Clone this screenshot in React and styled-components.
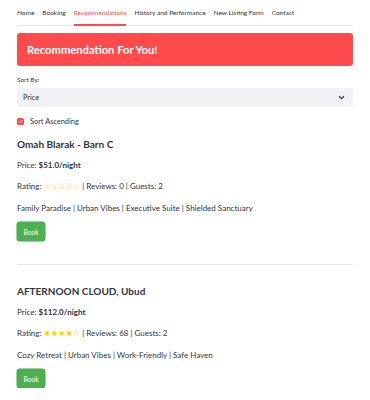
import React from "react";
import styled, { createGlobalStyle } from "styled-components";

const Global = createGlobalStyle`
  html, body { margin: 0; padding: 0; background: #ffffff; }
  body { font-family: Lato, "Noto Sans", sans-serif; color: #31333f; }
  * { box-sizing: border-box; }
`;

const Page = styled.div`
  width: 370px;
  padding: 0 17px;
`;

const Tabs = styled.div`
  display: flex;
  gap: 8px;
  height: 26px;
  border-bottom: 1px solid #e6e7eb;
`;

const Tab = styled.div`
  font-size: 6.5px;
  display: flex;
  align-items: center;
  padding-top: 1px;
  color: ${(p) => (p.$active ? "#ff4b4b" : "#31333f")};
  border-bottom: 2px solid ${(p) => (p.$active ? "#ff4b4b" : "transparent")};
  margin-bottom: -1px;
  white-space: nowrap;
`;

const Banner = styled.div`
  margin-top: 7px;
  height: 33px;
  background: #ff4b4b;
  border-radius: 3px;
  color: #ffffff;
  font-weight: 700;
  font-size: 11.2px;
  display: flex;
  align-items: center;
  padding-left: 10px;
`;

const Label = styled.div`
  margin-top: 9px;
  font-size: 6.4px;
  height: 10px;
  line-height: 10px;
`;

const Select = styled.div`
  margin-top: 3px;
  height: 19px;
  background: #f0f2f6;
  border-radius: 3px;
  display: flex;
  align-items: center;
  justify-content: space-between;
  padding: 0 8px 0 6px;
  font-size: 7.4px;
`;

const CheckRow = styled.div`
  margin-top: 9px;
  display: flex;
  align-items: center;
  gap: 6px;
  font-size: 7.4px;
  height: 10px;
`;

const Box = styled.span`
  width: 7px;
  height: 7px;
  border-radius: 1.5px;
  background: #ff4b4b;
  display: inline-flex;
  align-items: center;
  justify-content: center;
`;

const Card = styled.div`
  display: flex;
  flex-direction: column;
  align-items: flex-start;
`;

const Title = styled.div`
  font-weight: 700;
  font-size: 10px;
  height: 14px;
  line-height: 14px;
  margin-top: ${(p) => p.$top}px;
`;

const Line = styled.div`
  font-size: 8px;
  height: 12px;
  line-height: 12px;
  margin-top: ${(p) => p.$top}px;
  white-space: nowrap;
`;

const Strong = styled.span`
  font-weight: 700;
`;

const Stars = styled.span`
  color: #fdd000;
  font-size: 8.2px;
  font-family: "DejaVu Sans", sans-serif;
`;

const BookButton = styled.button`
  margin-top: 8px;
  height: 19px;
  width: 28px;
  border: none;
  border-radius: 3px;
  background: #4caf50;
  color: #ffffff;
  font-family: inherit;
  font-size: 6.6px;
  padding: 0;
  box-shadow: 0 0 0 0.5px #43a047;
`;

const Divider = styled.hr`
  margin: 23px 0 0;
  border: none;
  border-top: 1px solid #e6e7eb;
  width: 100%;
`;

const Chevron = () => (
  <svg width="7" height="5" viewBox="0 0 7 5">
    <path d="M1 1.2 L3.5 3.6 L6 1.2" fill="none" stroke="#31333f" strokeWidth="1.2" />
  </svg>
);

const Check = () => (
  <svg width="5" height="5" viewBox="0 0 5 5">
    <path d="M0.9 2.6 L2.1 3.8 L4.2 1.2" fill="none" stroke="#fff" strokeWidth="0.9" />
  </svg>
);

const listings = [
  {
    name: "Omah Blarak - Barn C",
    price: "$51.0/night",
    stars: "☆☆☆☆☆",
    reviews: 0,
    guests: 2,
    tags: "Family Paradise | Urban Vibes | Executive Suite | Shielded Sanctuary",
  },
  {
    name: "AFTERNOON CLOUD, Ubud",
    price: "$112.0/night",
    stars: "★★★★☆",
    reviews: 68,
    guests: 2,
    tags: "Cozy Retreat | Urban Vibes | Work-Friendly | Safe Haven",
  },
];

export default function App() {
  const tabs = ["Home", "Booking", "Recommendations", "History and Performance", "New Listing Form", "Contact"];
  return (
    <Page>
      <Global />
      <Tabs>
        {tabs.map((t) => (
          <Tab key={t} $active={t === "Recommendations"}>{t}</Tab>
        ))}
      </Tabs>
      <Banner>Recommendation For You!</Banner>
      <Label>Sort By:</Label>
      <Select>
        <span>Price</span>
        <Chevron />
      </Select>
      <CheckRow>
        <Box><Check /></Box>
        <span>Sort Ascending</span>
      </CheckRow>
      {listings.map((l, i) => (
        <Card key={l.name}>
          {i > 0 && <Divider />}
          <Title $top={i === 0 ? 11 : 19}>{l.name}</Title>
          <Line $top={8}>Price: <Strong>{l.price}</Strong></Line>
          <Line $top={9}>Rating: <Stars>{l.stars}</Stars> | Reviews: {l.reviews} | Guests: {l.guests}</Line>
          <Line $top={10}>{l.tags}</Line>
          <BookButton>Book</BookButton>
        </Card>
      ))}
    </Page>
  );
}
